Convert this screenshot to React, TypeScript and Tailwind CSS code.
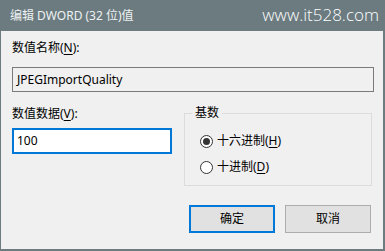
const FONT = "font-['Segoe_UI','Noto_Sans','Noto_Sans_CJK_SC',sans-serif]";

function Radio({ checked, label, hotkey }: { checked: boolean; label: string; hotkey: string }) {
  return (
    <div className="flex items-center h-[16px]">
      <span className="flex items-center justify-center w-[13px] h-[13px] rounded-full border border-[#333] bg-white">
        {checked && <span className="block w-[7px] h-[7px] rounded-full bg-[#333]" />}
      </span>
      <span className="ml-[4px] text-[12px] leading-[16px] text-black">
        {label}(<span className="underline underline-offset-2">{hotkey}</span>)
      </span>
    </div>
  );
}

export default function App() {
  return (
    <div className={`w-[385px] h-[251px] bg-white ${FONT}`}>
      <div className="w-[385px] h-[251px] flex flex-col border-l border-r-2 border-b-2 border-[#6b7b80] bg-[#f0f0f0]">
        {/* title bar */}
        <div className="h-[31px] bg-[#6b7b80] flex items-center justify-between pl-[9px] pr-[4px] shrink-0">
          <span className="text-[12px] text-[#eef1f1]">编辑 DWORD (32 位)值</span>
          <span className="font-['Open_Sans','Noto_Sans',sans-serif] font-light text-[17px] text-white -mt-[2px]">www.it528.com</span>
        </div>

        <div className="px-[11px] pt-[9px] flex flex-col">
          <div className="text-[12px] leading-[16px] text-black">
            数值名称(<span className="underline underline-offset-2">N</span>):
          </div>
          <div className="mt-[11px] w-[362px] h-[25px] border border-[#7a7a7a] bg-[#f0f0f0] flex items-center px-[4px] text-[12px] text-black">
            JPEGImportQuality
          </div>

          <div className="mt-[14px] flex">
            <div className="w-[161px] flex flex-col">
              <div className="text-[12px] leading-[16px] text-black">
                数值数据(<span className="underline underline-offset-2">V</span>):
              </div>
              <div className="mt-[6px] h-[26px] border-2 border-[#0078d7] bg-white flex items-center px-[3px] text-[12px] text-black">
                100
              </div>
            </div>

            <fieldset className="ml-[12px] mt-[-1px] w-[189px] h-[81px] border border-[#dcdcdc] px-[15px]">
              <legend className="ml-[-8px] px-[3px] text-[12px] leading-[16px] text-black">基数</legend>
              <div className="mt-[12px] flex flex-col gap-[10px]">
                <Radio checked label="十六进制" hotkey="H" />
                <Radio checked={false} label="十进制" hotkey="D" />
              </div>
            </fieldset>
          </div>

          <div className="mt-[19px] flex justify-end gap-[10px] pr-[1px]">
            <button className="w-[86px] h-[28px] border-2 border-[#0078d7] bg-[#e1e1e1] text-[12px] text-black">
              确定
            </button>
            <button className="w-[86px] h-[28px] border border-[#adadad] bg-[#e1e1e1] text-[12px] text-black">
              取消
            </button>
          </div>
        </div>
      </div>
    </div>
  );
}
